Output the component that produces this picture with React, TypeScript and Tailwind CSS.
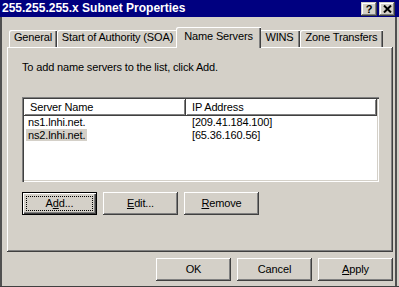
import type { ReactNode } from "react";

// Win2000 classic 3D edges, drawn with inset shadows so they don't move layout
const raised =
  "shadow-[inset_-1px_-1px_#404040,inset_1px_1px_#ffffff,inset_-2px_-2px_#808080]";
const sunken =
  "shadow-[inset_1px_1px_#808080,inset_2px_2px_#404040,inset_-1px_-1px_#ffffff,inset_-2px_-2px_#d4d0c8]";
const tabEdge =
  "shadow-[inset_1px_1px_#ffffff,inset_-1px_0_#404040,inset_-2px_0_#808080]";

function Tab({ label, w, active }: { label: string; w: string; active?: boolean }) {
  if (active) {
    return (
      <div
        className={`relative z-10 -mx-[2px] -mb-px h-[21px] w-[85px] shrink-0 rounded-tl-[2px] bg-[#d4d0c8] pt-[3px] text-center leading-[13px] ${tabEdge}`}
      >
        {label}
      </div>
    );
  }
  return (
    <div
      className={`${w} h-[17px] shrink-0 rounded-tl-[2px] pt-[1px] text-center leading-[13px] ${tabEdge}`}
    >
      {label}
    </div>
  );
}

function Btn({ children, def }: { children: ReactNode; def?: boolean }) {
  if (def) {
    return (
      <button
        type="button"
        className="relative h-[23px] w-[75px] border border-black bg-[#d4d0c8] leading-[13px] shadow-[inset_1px_1px_#ffffff,inset_-1px_-1px_#404040,inset_-2px_-2px_#808080]"
      >
        <span className="absolute inset-[3px] border border-dotted border-black" />
        {children}
      </button>
    );
  }
  return (
    <button type="button" className={`h-[23px] w-[75px] bg-[#d4d0c8] leading-[13px] ${raised}`}>
      {children}
    </button>
  );
}

function U({ children }: { children: string }) {
  return <span className="underline underline-offset-[1px]">{children}</span>;
}

function CaptionBtn({ children }: { children: ReactNode }) {
  return (
    <div className="flex h-[14px] w-[16px] items-center justify-center bg-[#d4d0c8] shadow-[inset_-1px_-1px_#404040,inset_1px_1px_#d4d0c8,inset_-2px_-2px_#808080,inset_2px_2px_#ffffff]">
      {children}
    </div>
  );
}

const servers = [
  { name: "ns1.lnhi.net.", ip: "[209.41.184.100]" },
  { name: "ns2.lnhi.net.", ip: "[65.36.160.56]", sel: true },
];

export default function App() {
  return (
    <div className="flex h-[287px] w-[399px] flex-col overflow-hidden border-b border-[#404040] bg-[#d4d0c8] font-['Liberation_Sans',Arial,sans-serif] text-[11px] tracking-[-0.15px] text-black">
      <div className="flex h-[17px] shrink-0 items-start justify-between bg-[#000080] pl-[2px] pr-[4px]">
        <span className="text-[12px] font-bold leading-[17px] tracking-normal text-white">
          255.255.255.x Subnet Properties
        </span>
        <div className="flex gap-[2px] pt-[2px]">
          <CaptionBtn>
            <span className="text-[11px] font-bold leading-none tracking-normal">?</span>
          </CaptionBtn>
          <CaptionBtn>
            <svg width="9" height="8" viewBox="0 0 9 8">
              <path d="M1 0.5 L8 7.5 M8 0.5 L1 7.5" stroke="#000" strokeWidth="2" />
            </svg>
          </CaptionBtn>
        </div>
      </div>

      <div className="mr-[2px] flex flex-1 flex-col border-l-2 border-r-2 border-[#505050] pl-[5px]">
        <div className="mt-[10px] flex h-[20px] items-end pl-[2px]">
          <Tab label="General" w="w-[48px]" />
          <Tab label="Start of Authority (SOA)" w="w-[121px]" />
          <Tab label="Name Servers" w="w-[81px]" active />
          <Tab label="WINS" w="w-[41px]" />
          <Tab label="Zone Transfers" w="w-[83px]" />
        </div>

        <div className="w-[386px]">
          <div className={`h-[205px] pl-[15px] pt-[14px] ${raised}`}>
            <p className="leading-[13px]">To add name servers to the list, click Add.</p>

            <div className={`mt-[23px] h-[85px] w-[357px] bg-white p-[2px] ${sunken}`}>
              <div className="flex h-[17px]">
                <div className={`w-[162px] pl-[6px] leading-[16px] ${raised}`}>Server Name</div>
                <div className={`flex-1 pl-[6px] leading-[16px] ${raised}`}>IP Address</div>
              </div>
              {servers.map((s) => (
                <div key={s.name} className="flex h-[13px] leading-[13px]">
                  <div className="w-[162px] pl-[2px]">
                    <span className={`px-[2px] ${s.sel ? "bg-[#d4d0c8]" : ""}`}>{s.name}</span>
                  </div>
                  <div className="flex-1 pl-[6px]">{s.ip}</div>
                </div>
              ))}
            </div>

            <div className="mt-[10px] flex gap-[6px]">
              <Btn def>
                A<U>d</U>d...
              </Btn>
              <Btn>
                <U>E</U>dit...
              </Btn>
              <Btn>
                <U>R</U>emove
              </Btn>
            </div>
          </div>

          <div className="mt-[6px] flex justify-end gap-[6px]">
            <Btn>OK</Btn>
            <Btn>Cancel</Btn>
            <Btn>
              <U>A</U>pply
            </Btn>
          </div>
        </div>
      </div>
    </div>
  );
}
